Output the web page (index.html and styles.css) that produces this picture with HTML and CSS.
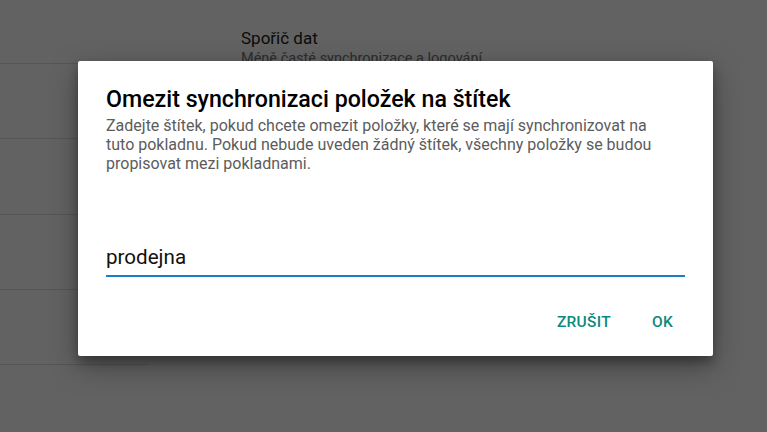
FILE: index.html
```html
<!DOCTYPE html>
<html lang="cs">
<head>
<meta charset="utf-8">
<title>Omezit synchronizaci</title>
<link rel="stylesheet" href="styles.css">
</head>
<body>
<div class="screen">
  <div class="nav">
    <div class="nav-item first"></div>
    <div class="nav-item"></div>
    <div class="nav-item"></div>
    <div class="nav-item"></div>
    <div class="nav-item"></div>
  </div>
  <div class="pane">
    <div class="pref">
      <div class="pref-title">Spořič dat</div>
      <div class="pref-summary">Méně časté synchronizace a logování</div>
    </div>
  </div>
  <div class="scrim"></div>
  <div class="dialog">
    <h1 class="dialog-title">Omezit synchronizaci položek na štítek</h1>
    <p class="dialog-text">Zadejte štítek, pokud chcete omezit položky, které se mají synchronizovat na tuto pokladnu. Pokud nebude uveden žádný štítek, všechny položky se budou propisovat mezi pokladnami.</p>
    <div class="field">prodejna</div>
    <div class="actions">
      <span class="btn">ZRUŠIT</span>
      <span class="btn">OK</span>
    </div>
  </div>
</div>
</body>
</html>
```

FILE: styles.css
```css
html, body {
  margin: 0;
  padding: 0;
}
body {
  font-family: Roboto, "Noto Sans", sans-serif;
  background: #ffffff;
}
.screen {
  position: relative;
  width: 767px;
  height: 432px;
  overflow: hidden;
  display: flex;
  background: #ffffff;
}
.nav {
  width: 148px;
  display: flex;
  flex-direction: column;
}
.nav-item {
  height: 74.3px;
  border-bottom: 1px solid #e0e0e0;
  flex: none;
}
.nav-item.first {
  height: 63px;
}
.pane {
  flex: 1;
  padding-left: 93px;
  padding-top: 27px;
}
.pref-title {
  font-size: 17px;
  color: #212121;
  line-height: 22px;
}
.pref-summary {
  font-size: 14.5px;
  color: #757575;
  line-height: 20px;
}
.scrim {
  position: absolute;
  inset: 0;
  background: rgba(0, 0, 0, 0.615);
}
.dialog {
  position: absolute;
  left: 78px;
  top: 61px;
  width: 635px;
  height: 295px;
  box-sizing: border-box;
  padding: 24px 28px 0 28px;
  background: #ffffff;
  border-radius: 2px;
  box-shadow: 0 10px 28px rgba(0, 0, 0, 0.35), 0 6px 10px rgba(0, 0, 0, 0.25);
  display: flex;
  flex-direction: column;
}
.dialog-title {
  margin: 0;
  font-size: 23.2px;
  font-weight: 500;
  line-height: 28px;
  color: #000000;
}
.dialog-text {
  margin: 3px 0 0 0;
  padding-right: 18px;
  font-size: 16px;
  line-height: 19px;
  color: #5c5c5c;
}
.field {
  margin-top: 71px;
  font-size: 20.6px;
  line-height: 26px;
  color: #111111;
  padding-bottom: 5px;
  border-bottom: 2px solid #1a7fc7;
}
.actions {
  display: flex;
  justify-content: flex-end;
  gap: 41px;
  padding-right: 12px;
  margin-top: 36px;
}
.btn {
  font-size: 15.5px;
  font-weight: 500;
  color: #0a8a7c;
  letter-spacing: 0.3px;
}
```
